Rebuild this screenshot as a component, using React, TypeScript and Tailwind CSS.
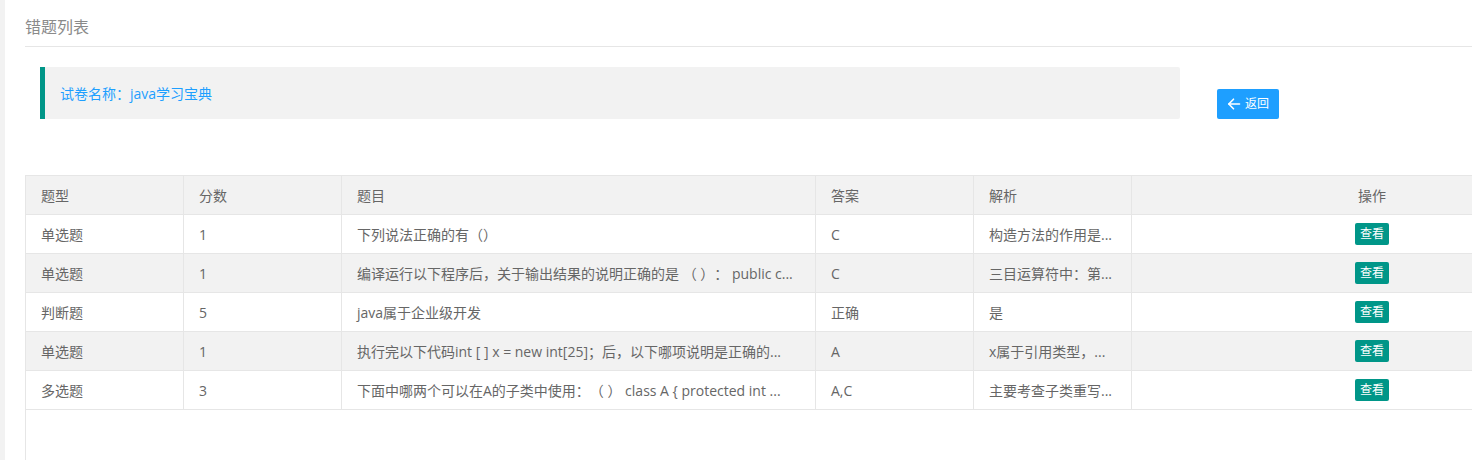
import React from "react";

const font = { fontFamily: '"Open Sans", "Noto Sans CJK SC", sans-serif' };

const rows = [
  ["单选题", "1", "下列说法正确的有（）", "C", "构造方法的作用是..."],
  ["单选题", "1", "编译运行以下程序后，关于输出结果的说明正确的是 （ ）： public c...", "C", "三目运算符中：第..."],
  ["判断题", "5", "java属于企业级开发", "正确", "是"],
  ["单选题", "1", "执行完以下代码int [ ] x = new int[25]；后，以下哪项说明是正确的...", "A", "x属于引用类型，..."],
  ["多选题", "3", "下面中哪两个可以在A的子类中使用：（ ） class A { protected int ...", "A,C", "主要考查子类重写..."],
];

function Cell({ w, children, last }: { w: string; children: React.ReactNode; last?: boolean }) {
  return (
    <div
      className={`${w} shrink-0 h-full flex items-center px-[15px] overflow-hidden whitespace-nowrap ${
        last ? "justify-center" : "border-r border-[#e6e6e6]"
      }`}
    >
      {children}
    </div>
  );
}

export default function App() {
  const widths = ["w-[158px]", "w-[158px]", "w-[474px]", "w-[158px]", "w-[158px]", "w-[480px]"];
  return (
    <div
      className="flex w-[1472px] h-[460px] overflow-hidden bg-white text-[#666] [text-spacing-trim:space-all]"
      style={font}
    >
      <div className="w-[5px] shrink-0 bg-[#f2f2f2]" />
      <div className="flex flex-col flex-1 pl-[20px] min-w-0">
        <div className="pt-[16px] pb-[8px] leading-[22px] text-[16px] text-[#8a8a8a] border-b border-[#e6e6e6]">
          错题列表
        </div>
        <div className="flex items-end mt-[20px] pl-[15px]">
          <div className="w-[1140px] h-[52px] bg-[#f2f2f2] border-l-[5px] border-[#009688] rounded-r-[2px] flex items-center pl-[15px] text-[14px] text-[#1E9FFF]">
            试卷名称：java学习宝典
          </div>
          <button className="ml-[37px] h-[30px] px-[10px] rounded-[2px] bg-[#1E9FFF] text-white text-[12px] flex items-center gap-[4px]">
            <svg width="14" height="14" viewBox="0 0 14 14" fill="none" stroke="white" strokeWidth="1.6" strokeLinecap="round" strokeLinejoin="round">
              <path d="M12.5 7H1.8" />
              <path d="M6.5 2.2L1.8 7l4.7 4.8" />
            </svg>
            返回
          </button>
        </div>
        <div className="mt-[56px] flex-1 border-l border-t border-[#e6e6e6] text-[14px] w-[1600px]">
          <div className="flex h-[39px] border-b border-[#e6e6e6] bg-[#f2f2f2] w-[1585px]">
            {["题型", "分数", "题目", "答案", "解析", "操作"].map((h, i) => (
              <Cell key={h} w={widths[i]} last={i === 5}>
                {h}
              </Cell>
            ))}
          </div>
          {rows.map((r, ri) => (
            <div
              key={ri}
              className={`flex h-[39px] border-b border-[#e6e6e6] w-[1585px] ${ri % 2 === 1 ? "bg-[#f2f2f2]" : "bg-white"}`}
            >
              {r.map((c, i) => (
                <Cell key={i} w={widths[i]}>
                  {c}
                </Cell>
              ))}
              <Cell w={widths[5]} last>
                <span className="h-[22px] px-[5px] rounded-[2px] bg-[#009688] text-white text-[12px] leading-[22px]">
                  查看
                </span>
              </Cell>
            </div>
          ))}
        </div>
      </div>
    </div>
  );
}
